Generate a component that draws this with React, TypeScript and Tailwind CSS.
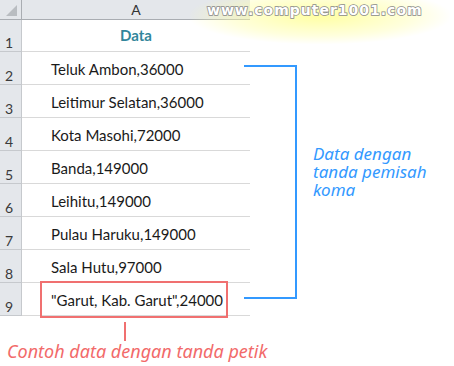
const rows = [
  'Teluk Ambon,36000',
  'Leitimur Selatan,36000',
  'Kota Masohi,72000',
  'Banda,149000',
  'Leihitu,149000',
  'Pulau Haruku,149000',
  'Sala Hutu,97000',
  '"Garut, Kab. Garut",24000',
];

const cellFont = { fontFamily: 'Lato, "Noto Sans", sans-serif' };
const noteFont = { fontFamily: '"Noto Sans", "DejaVu Sans", sans-serif' };

function RowNumber({ n, h }: { n: number; h: string }) {
  return (
    <div className={`${h} flex items-end pl-[5px] pb-[1px] bg-[#e4e7eb] border-r border-b border-[#c6c9cd] text-[14px] leading-none text-[#3a3a3a]`} style={cellFont}>
      {n}
    </div>
  );
}

export default function App() {
  return (
    <div className="relative w-[454px] h-[366px] bg-white overflow-hidden flex">
      {/* sheet + quoted-value note */}
      <div className="w-[250px] shrink-0 flex flex-col">
        <div className="grid grid-cols-[22px_228px]">
          <div className="h-[20px] bg-[#e4e7eb] border-r border-b border-[#a9adb2] flex items-end justify-end pr-[4px] pb-[3px]">
            <div className="w-0 h-0 border-l-[11px] border-l-transparent border-b-[11px] border-b-[#b9bdc1]" />
          </div>
          <div className="h-[20px] bg-[#e4e7eb] border-b border-[#a9adb2] flex items-center justify-center text-[14px] text-[#333]" style={cellFont}>
            A
          </div>

          <RowNumber n={1} h="h-[32px]" />
          <div className="h-[32px] border-b border-[#d9d9d9] flex items-center justify-center text-[15px] font-bold text-[#31869b]" style={cellFont}>
            Data
          </div>

          {rows.map((r, i) => (
            <div key={r} className="contents">
              <RowNumber n={i + 2} h="h-[33px]" />
              <div className="relative h-[33px] border-b border-[#d9d9d9] flex items-center pl-[29px] pt-[2px] text-[15px] text-[#1a1a1a]" style={cellFont}>
                {r}
                {i === rows.length - 1 && (
                  <div className="absolute left-[18px] top-[-2px] w-[188px] h-[37px] border-2 border-[#f07070]" />
                )}
              </div>
            </div>
          ))}
        </div>

        <div className="ml-[124px] mt-[6px] w-[2px] h-[19px] bg-[#f07070]" />
        <div className="pl-[7px] pt-[1px] whitespace-nowrap text-[18px] italic leading-none text-[#f26a6a]" style={noteFont}>
          Contoh data dengan tanda petik
        </div>
      </div>

      {/* bracket around the comma-separated rows */}
      <div className="-ml-[6px] mt-[65px] w-[53px] h-[234px] shrink-0 border-t-2 border-r-2 border-b-2 border-[#3399ff]" />
      <div className="ml-[16px] mt-[145px] flex flex-col gap-[1px] whitespace-nowrap text-[17px] italic leading-[17px] text-[#3399ff]" style={noteFont}>
        <span>Data dengan</span>
        <span>tanda pemisah</span>
        <span>koma</span>
      </div>

      {/* watermark */}
      <div className="absolute left-[190px] top-[-12px] w-[260px] h-[56px] rounded-full bg-[radial-gradient(ellipse_at_center,rgba(255,255,140,0.8)_0%,rgba(255,255,170,0.4)_50%,rgba(255,255,255,0)_72%)]" />
      <div
        className="absolute left-[207px] top-[3px] text-[14px] font-bold tracking-[1px] text-white leading-none [-webkit-text-stroke:1.5px_#8a8a8a] [paint-order:stroke_fill]"
        style={{ fontFamily: '"DejaVu Sans", sans-serif' }}
      >
        www.computer1001.com
      </div>
    </div>
  );
}
